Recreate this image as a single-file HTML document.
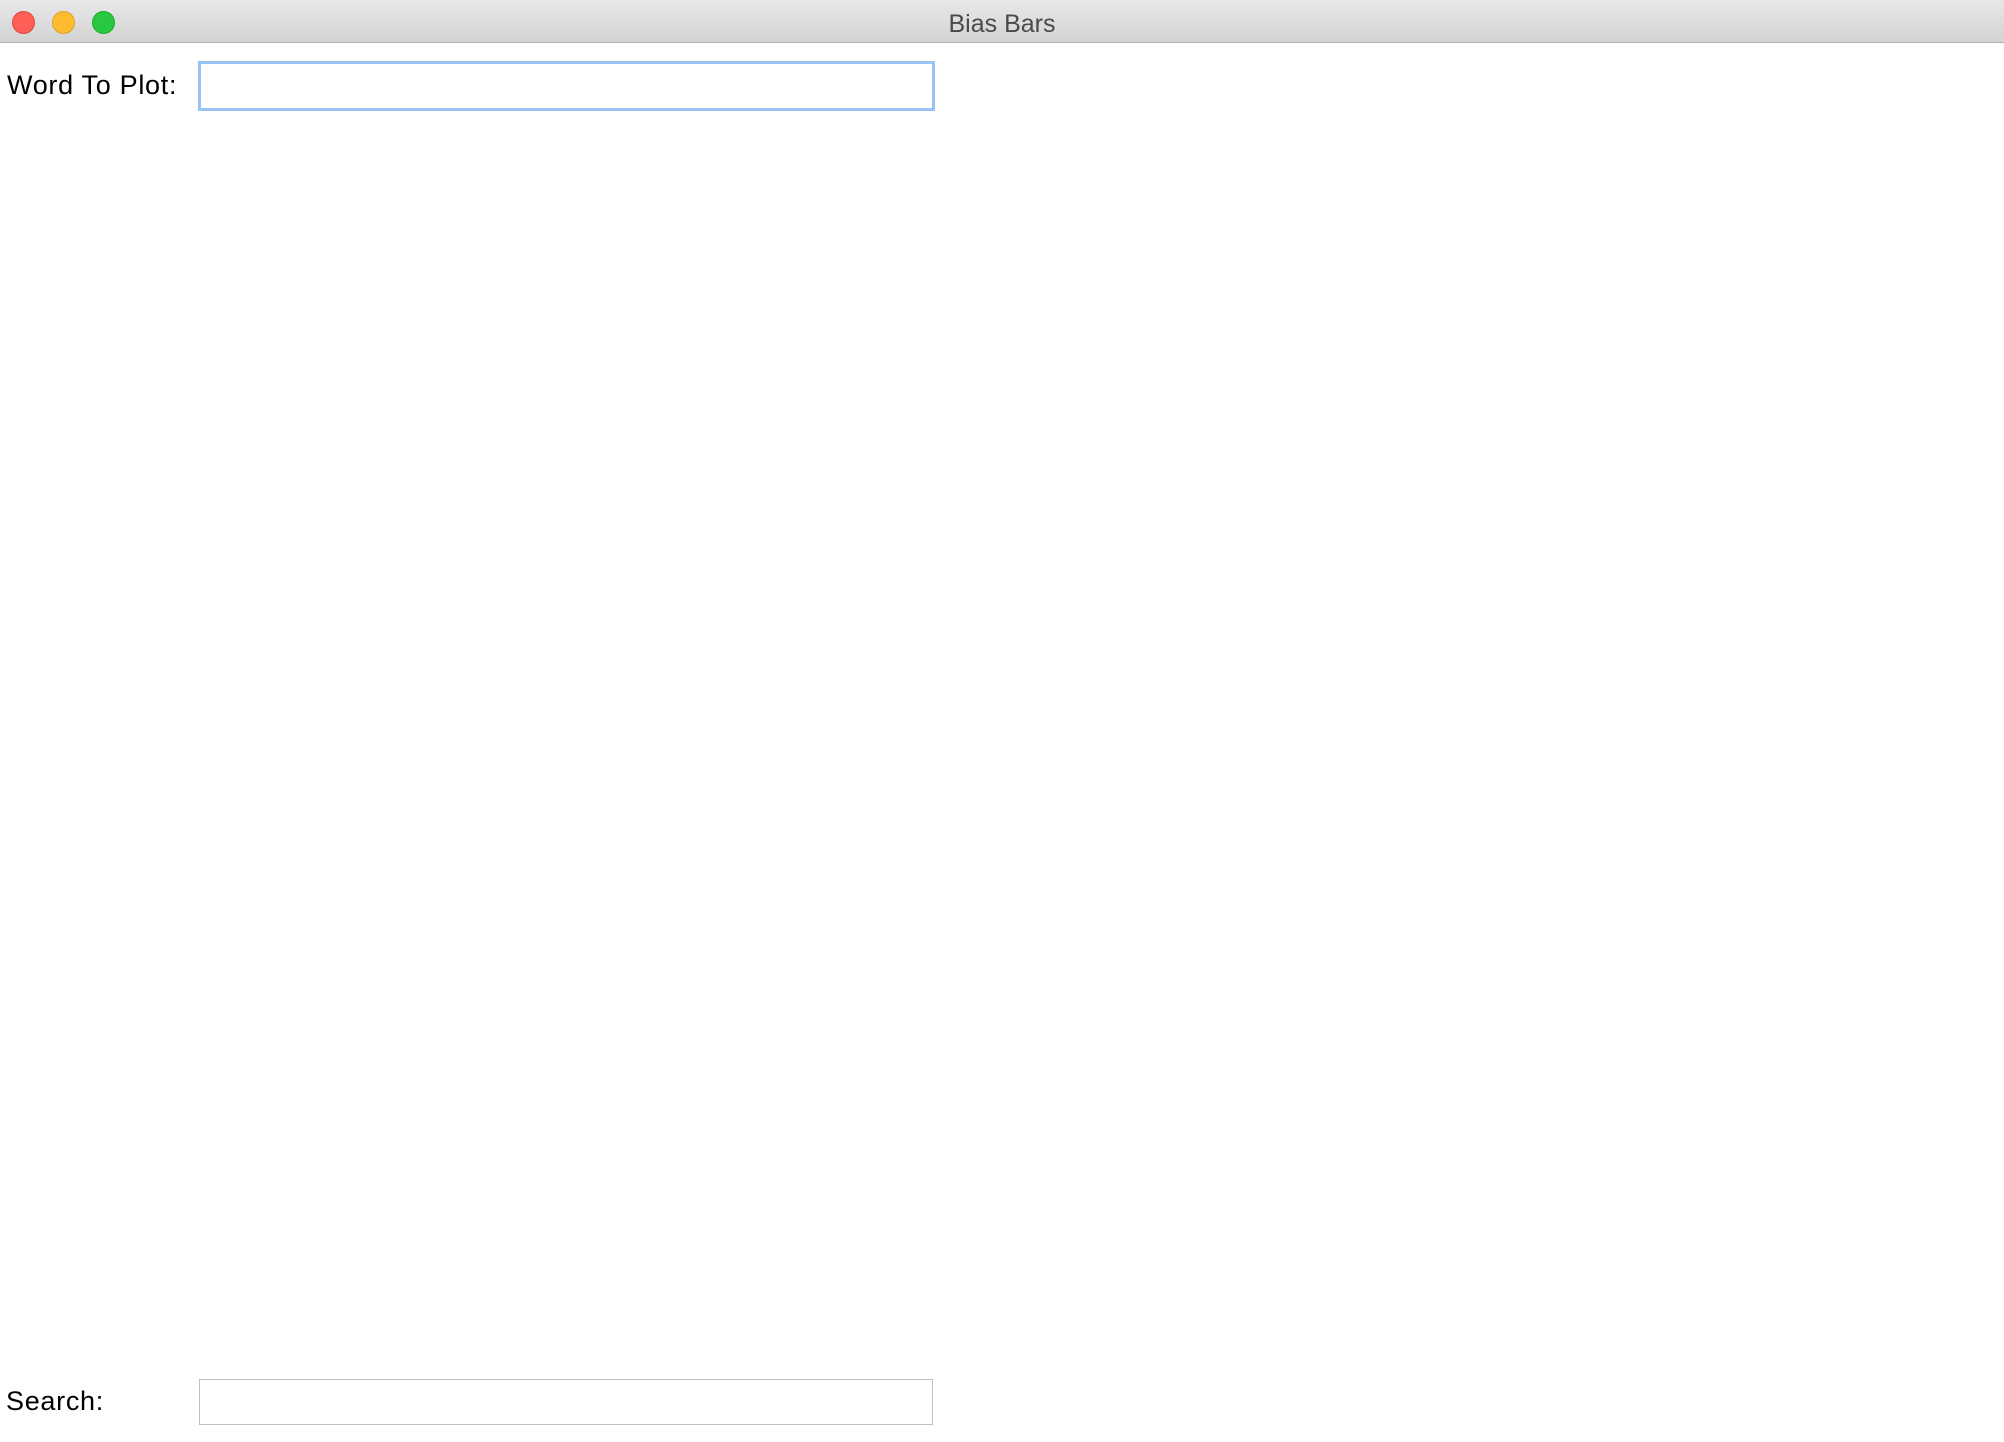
<!DOCTYPE html>
<html><head><style>
body{margin:0;width:2004px;height:1442px;background:#fff;position:relative;overflow:hidden;font-family:"Liberation Sans",sans-serif}
.tb{position:absolute;left:0;top:0;width:2004px;height:42px;background:linear-gradient(#e8e8e8,#d3d3d3);border-bottom:1px solid #b0b0b0}
.c{position:absolute;top:11px;width:23px;height:23px;border-radius:50%;box-sizing:border-box}
.t{position:absolute;left:0;width:2004px;top:10px;text-align:center;font-size:25px;color:#4a4a4a}
.l{position:absolute;font-size:27px;color:#000;letter-spacing:0.7px}
.in{position:absolute;background:#fff;box-sizing:border-box}
</style></head><body>
<div class="tb">
<div class="c" style="left:12px;background:#fe5f57;border:1px solid #e0443e"></div>
<div class="c" style="left:52px;background:#febc2e;border:1px solid #dea123"></div>
<div class="c" style="left:92px;background:#28c840;border:1px solid #1aab29"></div>
<div class="t">Bias Bars</div>
</div>
<div class="l" style="left:7px;top:70px">Word To Plot:</div>
<div class="in" style="left:198px;top:61px;width:737px;height:50px;border:3px solid #98c3f3"></div>
<div class="l" style="left:6px;top:1386px">Search:</div>
<div class="in" style="left:199px;top:1379px;width:734px;height:46px;border:1px solid #c0c0c0"></div>
</body></html>
